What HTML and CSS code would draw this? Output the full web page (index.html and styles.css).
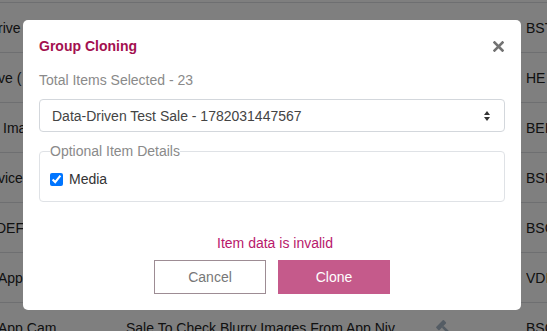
FILE: index.html
```html
<!DOCTYPE html>
<html lang="en">
<head>
<meta charset="utf-8">
<title>Group Cloning</title>
<link rel="stylesheet" href="styles.css">
</head>
<body>
<div class="table">
  <div class="row"><div class="c1">rive</div><div class="c2"></div><div class="c3"><svg class="gavel" viewBox="0 0 20 20"><g transform="rotate(-45 10 10)"><rect x="4" y="3" width="12" height="5" rx="1"/><rect x="8.5" y="8" width="3" height="11" rx="1"/></g></svg></div><div class="c4">BST</div></div>
  <div class="row"><div class="c1">ve (</div><div class="c2"></div><div class="c3"><svg class="gavel" viewBox="0 0 20 20"><g transform="rotate(-45 10 10)"><rect x="4" y="3" width="12" height="5" rx="1"/><rect x="8.5" y="8" width="3" height="11" rx="1"/></g></svg></div><div class="c4">HE</div></div>
  <div class="row"><div class="c1 in">Ima</div><div class="c2"></div><div class="c3"><svg class="gavel" viewBox="0 0 20 20"><g transform="rotate(-45 10 10)"><rect x="4" y="3" width="12" height="5" rx="1"/><rect x="8.5" y="8" width="3" height="11" rx="1"/></g></svg></div><div class="c4">BEI</div></div>
  <div class="row"><div class="c1">vice</div><div class="c2"></div><div class="c3"><svg class="gavel" viewBox="0 0 20 20"><g transform="rotate(-45 10 10)"><rect x="4" y="3" width="12" height="5" rx="1"/><rect x="8.5" y="8" width="3" height="11" rx="1"/></g></svg></div><div class="c4">BSI</div></div>
  <div class="row"><div class="c1 out">DEF</div><div class="c2"></div><div class="c3"><svg class="gavel" viewBox="0 0 20 20"><g transform="rotate(-45 10 10)"><rect x="4" y="3" width="12" height="5" rx="1"/><rect x="8.5" y="8" width="3" height="11" rx="1"/></g></svg></div><div class="c4">BSC</div></div>
  <div class="row"><div class="c1">App</div><div class="c2"></div><div class="c3"><svg class="gavel" viewBox="0 0 20 20"><g transform="rotate(-45 10 10)"><rect x="4" y="3" width="12" height="5" rx="1"/><rect x="8.5" y="8" width="3" height="11" rx="1"/></g></svg></div><div class="c4">VDI</div></div>
  <div class="row"><div class="c1">App Cam</div><div class="c2">Sale To Check Blurry Images From App Niv</div><div class="c3"><svg class="gavel" viewBox="0 0 20 20"><g transform="rotate(-45 10 10)"><rect x="4" y="3" width="12" height="5" rx="1"/><rect x="8.5" y="8" width="3" height="11" rx="1"/></g></svg></div><div class="c4">BSC</div></div>
</div>

<div class="overlay">
  <div class="modal">
    <div class="modal-header">
      <h5 class="modal-title">Group Cloning</h5>
      <button class="close" type="button" aria-label="Close">
        <svg width="11" height="11" viewBox="0 0 11 11"><path d="M1.5 1.5 L9.5 9.5 M9.5 1.5 L1.5 9.5" stroke="#737373" stroke-width="2.6" stroke-linecap="square"/></svg>
      </button>
    </div>
    <div class="total">Total Items Selected - 23</div>
    <div class="select-wrap">
      <select class="select">
        <option>Data-Driven Test Sale - 1782031447567</option>
      </select>
      <svg class="select-arrow" width="6" height="10" viewBox="0 0 6 10"><path d="M3 0 L6 4 L0 4 Z M0 6 L6 6 L3 10 Z" fill="#333"/></svg>
    </div>
    <fieldset class="details">
      <legend class="legend">Optional Item Details</legend>
      <label class="check"><input type="checkbox" checked> Media</label>
    </fieldset>
    <div class="error">Item data is invalid</div>
    <div class="actions">
      <button class="btn btn-cancel" type="button">Cancel</button>
      <button class="btn btn-clone" type="button">Clone</button>
    </div>
  </div>
</div>
</body>
</html>
```

FILE: styles.css
```css
html, body {
  margin: 0;
  padding: 0;
  width: 547px;
  height: 331px;
  overflow: hidden;
  background: #ffffff;
  font-family: "Liberation Sans", Arial, sans-serif;
  font-size: 14px;
}

.table {
  padding-top: 2px;
  margin-left: -2px;
  width: 549px;
}

.row {
  display: grid;
  grid-template-columns: 128px 306px 94px 21px;
  height: 49px;
  border-top: 1px solid #dcdfe3;
  align-items: center;
  color: #222;
  white-space: nowrap;
}

.c1, .c2, .c4 {
  overflow: hidden;
}

.c1.in { padding-left: 5px; }
.c1.out { margin-left: -2px; }

.c3 {
  padding-left: 3px;
  display: flex;
  align-items: center;
}

.gavel {
  width: 18px;
  height: 18px;
  fill: #a9b8c8;
}

.overlay {
  position: fixed;
  inset: 0;
  background: rgba(0, 0, 0, 0.5);
  display: flex;
  align-items: flex-start;
  padding: 20px 0 0 23px;
}

.modal {
  width: 498px;
  box-sizing: border-box;
  background: #fff;
  border-radius: 5px;
  padding: 16px;
  display: flex;
  flex-direction: column;
}

.modal-header {
  display: flex;
  justify-content: space-between;
  align-items: center;
  height: 21px;
}

.modal-title {
  margin: 0;
  font-size: 14px;
  line-height: 21px;
  font-weight: bold;
  color: #a3104f;
}

.close {
  border: 0;
  background: none;
  padding: 0;
  margin-right: 1px;
  display: flex;
  cursor: pointer;
}

.total {
  margin-top: 13px;
  line-height: 21px;
  color: #8a8a8a;
}

.select-wrap {
  margin-top: 8px;
  position: relative;
}

.select {
  appearance: none;
  -webkit-appearance: none;
  width: 100%;
  height: 33px;
  box-sizing: border-box;
  border: 1px solid #d3d7dc;
  border-radius: 4px;
  background: #fff;
  padding: 0 30px 0 12px;
  font-family: "Liberation Sans", Arial, sans-serif;
  font-size: 14px;
  color: #444;
}

.select-arrow {
  position: absolute;
  right: 15px;
  top: 12px;
}

.details {
  margin: 9px 0 0 0;
  border: 1px solid #dfe2e6;
  border-radius: 4px;
  padding: 0 10px 11px 10px;
}

.legend {
  padding: 0;
  line-height: 21px;
  color: #8a8a8a;
}

.check {
  margin-top: 7px;
  display: flex;
  align-items: center;
  gap: 6px;
  line-height: 21px;
  color: #333;
}

.check input {
  margin: 0;
  width: 13px;
  height: 13px;
}

.error {
  margin-top: 31px;
  padding-left: 6px;
  line-height: 21px;
  text-align: center;
  color: #b8186b;
}

.actions {
  margin-top: 6px;
  display: flex;
  justify-content: center;
  gap: 12px;
}

.btn {
  width: 112px;
  height: 34px;
  box-sizing: border-box;
  font-family: "Liberation Sans", Arial, sans-serif;
  font-size: 14px;
  border-radius: 0;
  cursor: pointer;
}

.btn-cancel {
  background: #fff;
  border: 1px solid #9d8c94;
  color: #777;
}

.btn-clone {
  background: #c55a8b;
  border: 1px solid #c55a8b;
  color: #fff;
}
```
